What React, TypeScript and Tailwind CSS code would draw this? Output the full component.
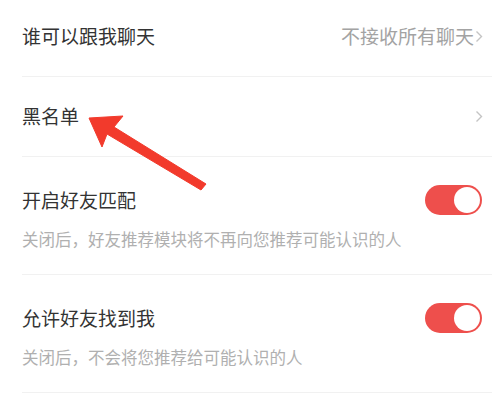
import React from 'react';

const FONT = { fontFamily: '"Noto Sans CJK SC", "Noto Sans", sans-serif' };

function Chevron() {
  return (
    <svg width="8" height="13" viewBox="0 0 8 13" className="shrink-0">
      <polyline points="1.5,1.5 6.5,6.5 1.5,11.5" fill="none" stroke="#c4c4c4" strokeWidth="1.4" />
    </svg>
  );
}

function Toggle() {
  return (
    <div className="flex h-[30px] w-[57px] items-center justify-end rounded-full bg-[#ee4f4c] p-[2px]">
      <div className="h-[26px] w-[26px] rounded-full bg-white" />
    </div>
  );
}

function SwitchRow({ title, desc }: { title: string; desc: string }) {
  return (
    <div className="ml-[22px] border-b border-[#f1f1f1] pb-[24px] pr-[10px] pt-[28px]">
      <div className="flex h-[30px] items-center justify-between">
        <span className="text-[19px] leading-[26px] text-[#333333]">{title}</span>
        <Toggle />
      </div>
      <p className="mt-[13px] text-[16.5px] leading-[22px] text-[#b0b0b0]">{desc}</p>
    </div>
  );
}

export default function App() {
  return (
    <div className="relative h-[402px] w-[492px] overflow-hidden bg-white" style={FONT}>
      <div className="ml-[22px] flex h-[77px] items-center justify-between border-b border-[#f1f1f1] pb-[3px] pr-[9px]">
        <span className="text-[19px] text-[#333333]">谁可以跟我聊天</span>
        <span className="flex items-center gap-[1px] text-[19px] text-[#a3a3a3]">
          不接收所有聊天
          <Chevron />
        </span>
      </div>
      <div className="ml-[22px] flex h-[80px] items-center justify-between border-b border-[#f1f1f1] pr-[9px]">
        <span className="text-[19px] text-[#333333]">黑名单</span>
        <Chevron />
      </div>
      <SwitchRow title="开启好友匹配" desc="关闭后，好友推荐模块将不再向您推荐可能认识的人" />
      <SwitchRow title="允许好友找到我" desc="关闭后，不会将您推荐给可能认识的人" />

      <svg className="pointer-events-none absolute left-0 top-0" width="492" height="402">
        <polygon
          points="89,118 123,116 114,127 206,184 201,190 107,134 102,147"
          fill="#f23a2c"
          stroke="#f23a2c"
          strokeWidth="1"
          strokeLinejoin="round"
        />
      </svg>
    </div>
  );
}
